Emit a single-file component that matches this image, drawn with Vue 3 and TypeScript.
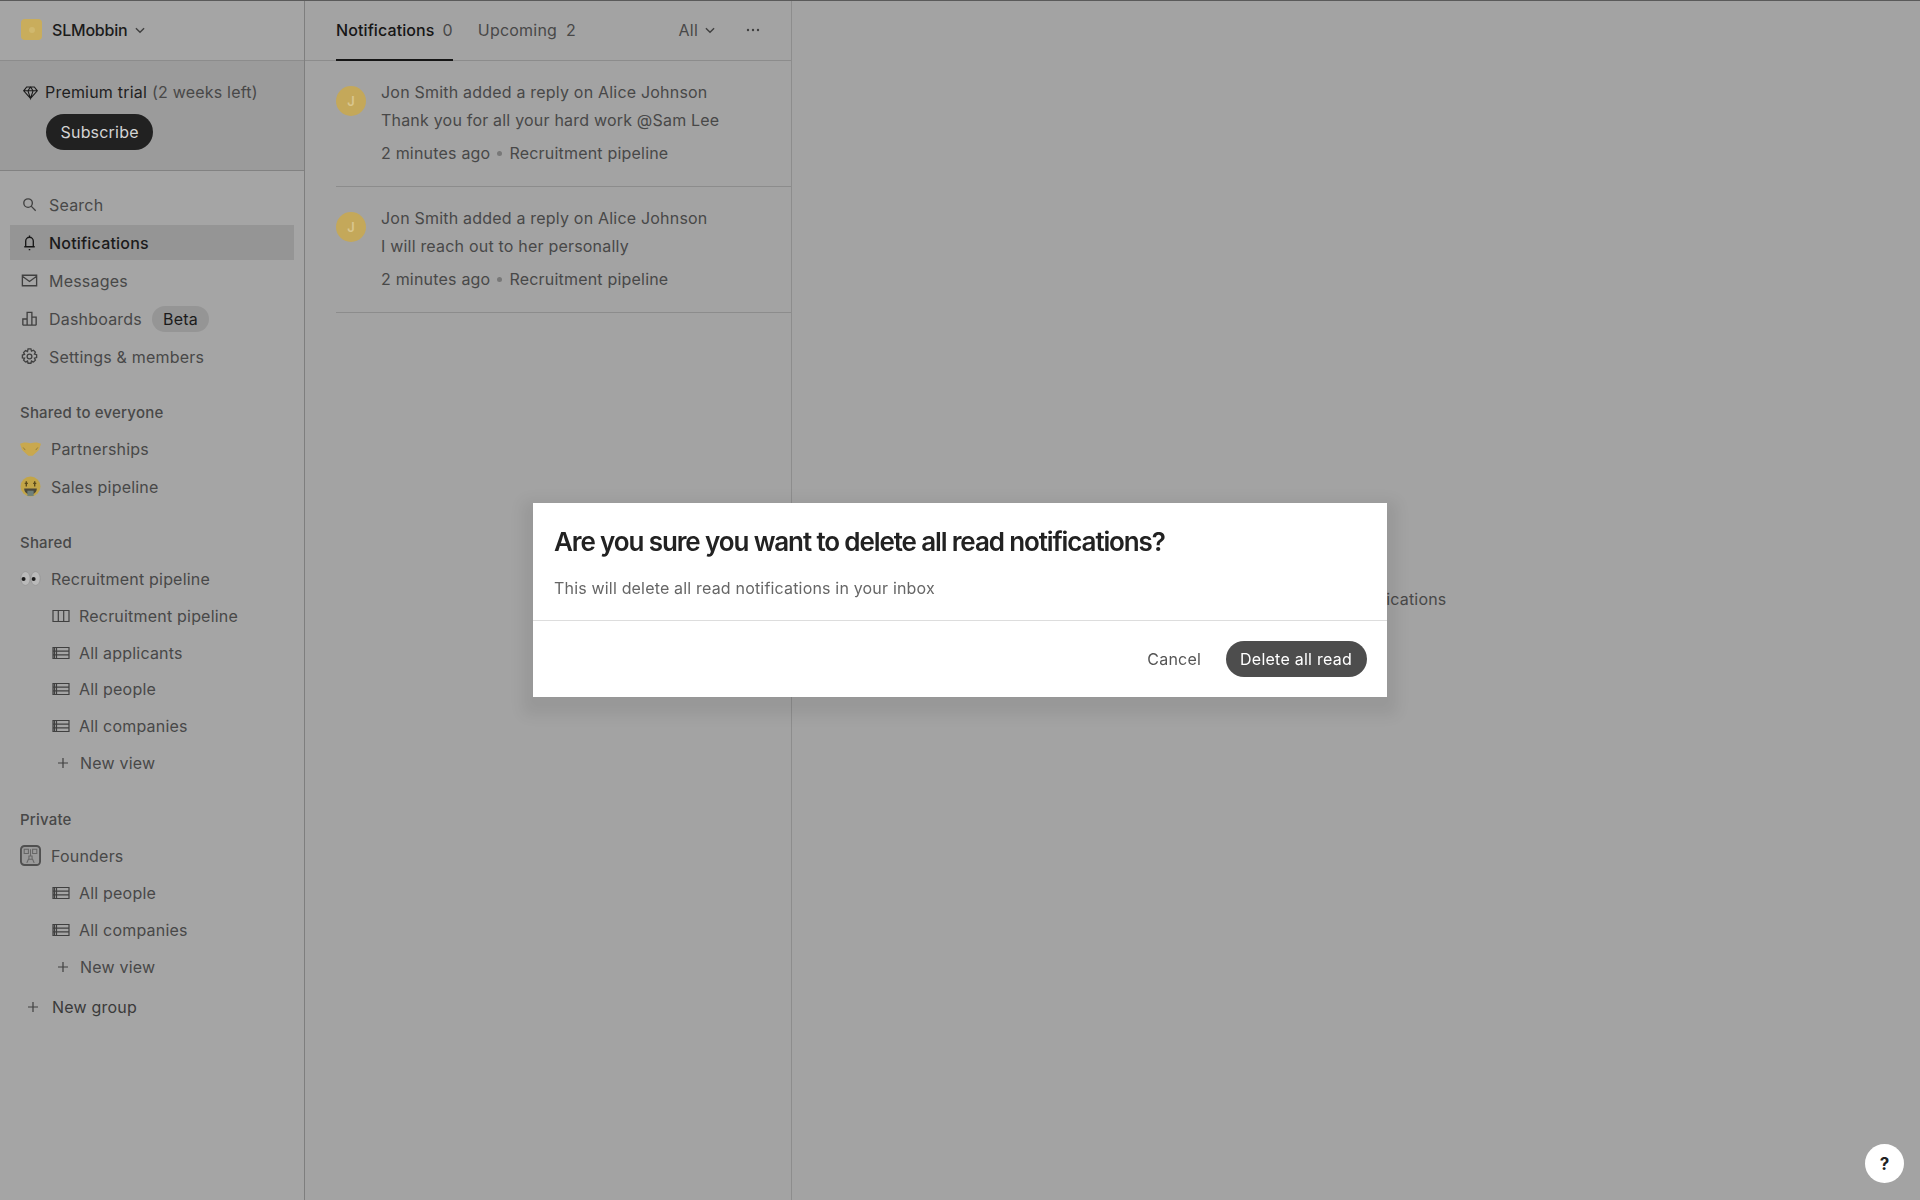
<template>
  <div class="page">
    <aside class="sidebar">
      <header class="workspace">
        <span class="logo"><i></i></span>
        <span class="workspace-name">SLMobbin</span>
        <svg class="chevron" viewBox="0 0 12 12"><path d="M2.500 4.500 6 8l3.500-3.500" /></svg>
      </header>

      <section class="trial">
        <div class="trial-line">
          <svg class="diamond" viewBox="0 0 20 20">
            <path d="M5.500 3.500h9l3.500 4.500-8 9-8-9zM2 8h16M7 8l3 9 3-9-3-4.500-3 4.500z" />
          </svg>
          <span class="trial-name">Premium trial</span>
          <span class="trial-left">(2 weeks left)</span>
        </div>
        <button class="subscribe">Subscribe</button>
      </section>

      <nav class="nav">
        <a
          v-for="item in mainNav"
          :key="item.label"
          :class="['nav-row', { active: item.active }]"
        >
          <svg class="icon" viewBox="0 0 20 20"><path :d="icons[item.icon]" /></svg>
          <span>{{ item.label }}</span>
          <span v-if="item.badge" class="badge">{{ item.badge }}</span>
        </a>
      </nav>

      <div class="group first">
        <h4>Shared to everyone</h4>
        <a class="nav-row emoji-row">
          <svg class="emoji" viewBox="0 0 20 20">
            <path fill="#c9a84e" d="M0 5.500c4-1.500 6-1.500 10-.5 4-1 6-1 10 .5l-2 6-6 5.500h-4l-6-5.500z" />
            <path fill="none" stroke="#8a7636" stroke-width=".8" d="M3 9l2 2.500M17 9l-2 2.500" />
          </svg>
          <span>Partnerships</span>
        </a>
        <a class="nav-row emoji-row">
          <svg class="emoji" viewBox="0 0 20 20">
            <circle cx="10" cy="10" r="9.500" fill="#c2a548" />
            <path fill="none" stroke="#5a4a1c" stroke-width="1.300" d="M6 5v5M14 5v5M4.500 7h3M12.500 7h3" />
            <path fill="#4a473a" d="M4 12h12c0 3.500-2.500 5.500-6 5.500s-6-2-6-5.500z" />
            <path fill="#6e7f7a" d="M7 14h6v5H7z" />
          </svg>
          <span>Sales pipeline</span>
        </a>
      </div>

      <div class="group">
        <h4>Shared</h4>
        <a class="nav-row emoji-row">
          <svg class="emoji" viewBox="0 0 20 20">
            <ellipse cx="5.200" cy="10" rx="4.400" ry="6.600" fill="#b9b9b9" stroke="#8a8a8a" stroke-width=".5" />
            <ellipse cx="14.800" cy="10" rx="4.400" ry="6.600" fill="#b9b9b9" stroke="#8a8a8a" stroke-width=".5" />
            <circle cx="3.400" cy="10.500" r="1.900" fill="#1c1c1c" />
            <circle cx="13" cy="10.500" r="1.900" fill="#1c1c1c" />
          </svg>
          <span>Recruitment pipeline</span>
        </a>
        <div class="sub-rows">
          <a v-for="view in sharedViews" :key="view.label" class="sub-row">
            <svg class="sub-icon" viewBox="0 0 18 14"><path :d="icons[view.icon]" /></svg>
            <span>{{ view.label }}</span>
          </a>
          <a class="sub-row new-view">
            <svg class="plus" viewBox="0 0 12 12"><path d="M6 1v10M1 6h10" /></svg>
            <span>New view</span>
          </a>
        </div>
      </div>

      <div class="group">
        <h4>Private</h4>
        <a class="nav-row emoji-row">
          <svg class="emoji" viewBox="0 0 20 20">
            <rect x=".9" y=".9" width="18.200" height="18.200" rx="3.500" fill="#9a9a9a" stroke="#505050" stroke-width="1.800" />
            <path fill="none" stroke="#666" d="M4 4h4v4H4zM12 4h4v4h-4zM8.500 10.500h3v3h-3zM6.500 17l1.500-3.500h4l1.500 3.500M10 4v6.500" />
          </svg>
          <span>Founders</span>
        </a>
        <div class="sub-rows">
          <a v-for="view in privateViews" :key="view.label" class="sub-row">
            <svg class="sub-icon" viewBox="0 0 18 14"><path :d="icons[view.icon]" /></svg>
            <span>{{ view.label }}</span>
          </a>
          <a class="sub-row new-view">
            <svg class="plus" viewBox="0 0 12 12"><path d="M6 1v10M1 6h10" /></svg>
            <span>New view</span>
          </a>
        </div>
      </div>

      <a class="new-group">
        <svg class="plus" viewBox="0 0 12 12"><path d="M6 1v10M1 6h10" /></svg>
        <span>New group</span>
      </a>
    </aside>

    <main class="inbox">
      <header class="tabs">
        <div class="tab current">
          <span class="tab-name">Notifications</span>
          <span class="tab-count">0</span>
        </div>
        <div class="tab">
          <span class="tab-name">Upcoming</span>
          <span class="tab-count">2</span>
        </div>
        <div class="filter">
          <span>All</span>
          <svg class="chevron" viewBox="0 0 12 12"><path d="M2.500 4.500 6 8l3.500-3.500" /></svg>
        </div>
        <svg class="more" viewBox="0 0 14 4">
          <circle cx="2" cy="2" r="1.200" />
          <circle cx="7" cy="2" r="1.200" />
          <circle cx="12" cy="2" r="1.200" />
        </svg>
      </header>

      <article v-for="note in notes" :key="note.body" class="note">
        <span class="avatar">J</span>
        <div class="note-text">
          <p>Jon Smith added a reply on Alice Johnson</p>
          <p>{{ note.body }}</p>
          <p class="note-meta">
            <span>2 minutes ago</span>
            <i class="dot"></i>
            <span>Recruitment pipeline</span>
          </p>
        </div>
      </article>
    </main>

    <section class="empty">
      <span>No unread notifications</span>
    </section>

    <div class="dialog-layer">
      <div class="modal">
        <div class="modal-body">
          <h2>Are you sure you want to delete all read notifications?</h2>
          <p>This will delete all read notifications in your inbox</p>
        </div>
        <div class="modal-actions">
          <button class="cancel">Cancel</button>
          <button class="confirm">Delete all read</button>
        </div>
      </div>
    </div>

    <button class="help">?</button>
  </div>
</template>

<script setup lang="ts">
const icons: Record<string, string> = {
  search: "M13 8.500a4.500 4.500 0 1 1-9 0 4.500 4.500 0 0 1 9 0ZM12 12l4.500 4.500",
  bell: "M10 2.500v1.500M4.500 14.500h11M6 14.500V8.500a4 4 0 0 1 8 0v6M9.200 17.500h1.600",
  mail: "M2.500 4.500h15v11h-15zM2.500 5.500 10 11l7.500-5.500",
  chart: "M3 17v-6.500h4.500V17M7.500 17V3.500h5V17M12.500 17V8.500H17V17M3 17h14",
  gear: "M8.500 2h3l.6 2.300 2.100-.9 2 2-1 2 2.300.7v3l-2.300.6 1 2.100-2 2-2.100-1-.6 2.300h-3l-.6-2.300-2.100 1-2-2 1-2.100L2.500 11.500v-3l2.300-.7-1-2 2-2 2.100.9zM12.500 10a2.500 2.500 0 1 1-5 0 2.500 2.500 0 0 1 5 0Z",
  columns: "M1 1.500h16v11H1zM6.300 1.500v11M11.700 1.500v11",
  table: "M1 1.500h16v11H1zM1 5.200h16M1 8.800h16M4.500 1.500v11M2.500 1.500v11",
};

const mainNav = [
  { label: "Search", icon: "search" },
  { label: "Notifications", icon: "bell", active: true },
  { label: "Messages", icon: "mail" },
  { label: "Dashboards", icon: "chart", badge: "Beta" },
  { label: "Settings & members", icon: "gear" },
];

const sharedViews = [
  { label: "Recruitment pipeline", icon: "columns" },
  { label: "All applicants", icon: "table" },
  { label: "All people", icon: "table" },
  { label: "All companies", icon: "table" },
];

const privateViews = [
  { label: "All people", icon: "table" },
  { label: "All companies", icon: "table" },
];

const notes = [
  { body: "Thank you for all your hard work @Sam Lee" },
  { body: "I will reach out to her personally" },
];
</script>

<style>
body {
  margin: 0;
  background: #a3a3a3;
}
</style>

<style scoped>
.page {
  display: grid;
  grid-template-columns: 305px 487px 1fr;
  height: 1200px;
  overflow: hidden;
  font-family: Inter, "Liberation Sans", sans-serif;
  font-size: 16px;
  letter-spacing: 0.2px;
  color: #484848;
  border-top: 1px solid #5a5a5a;
  box-sizing: border-box;
}

/* sidebar */
.sidebar {
  border-right: 1px solid #7e7e7e;
  background: #a5a5a5;
}

.workspace {
  display: flex;
  align-items: center;
  height: 57px;
  padding: 0 20px 2px 21px;
  border-bottom: 1px solid #8c8c8c;
}

.logo {
  display: flex;
  align-items: center;
  justify-content: center;
  width: 21px;
  height: 21px;
  border-radius: 4px;
  background: #c9ad5c;
}

.logo i {
  width: 6px;
  height: 6px;
  border-radius: 50%;
  background: #d0b86e;
}

.workspace-name {
  margin-left: 10px;
  font-weight: 500;
  letter-spacing: -0.2px;
  color: #1b1b1b;
}

.chevron {
  width: 14px;
  height: 14px;
  margin-left: 5px;
  fill: none;
  stroke: #404040;
  stroke-width: 1.200;
}

.trial {
  height: 110px;
  padding: 20px 0 0 22px;
  box-sizing: border-box;
  background: #9b9b9b;
  border-bottom: 1px solid #828282;
}

.trial-line {
  display: flex;
  align-items: center;
  height: 22px;
}

.diamond {
  width: 17px;
  height: 17px;
  margin-right: 6px;
  fill: none;
  stroke: #1b1b1b;
  stroke-width: 1.300;
}

.trial-name {
  color: #1f1f1f;
  margin-right: 5px;
}

.trial-left {
  color: #484848;
}

.subscribe {
  display: block;
  height: 36px;
  margin: 11px 0 0 24px;
  padding: 0 14.500px;
  border: none;
  border-radius: 18px;
  background: #212121;
  color: #d4d4d4;
  font: inherit;
  letter-spacing: inherit;
}

.nav {
  display: flex;
  flex-direction: column;
  gap: 3px;
  padding: 16px 10px 0;
}

.nav-row {
  display: flex;
  align-items: center;
  height: 35px;
  padding-left: 10px;
}

.nav-row.active {
  background: #959595;
  color: #1b1b1b;
  font-weight: 500;
}

.icon {
  flex: none;
  width: 19px;
  height: 19px;
  margin-right: 10px;
  fill: none;
  stroke: #404040;
  stroke-width: 1.400;
}

.active .icon {
  stroke: #161616;
}

.badge {
  height: 26px;
  margin-left: 10px;
  padding: 0 11px;
  border-radius: 13px;
  background: #959595;
  color: #1b1b1b;
  line-height: 26px;
}

.group {
  display: flex;
  flex-direction: column;
  padding: 29px 10px 0;
}

.group h4 {
  height: 20px;
  margin: 0 0 8px 10px;
  font-size: 15px;
  font-weight: 500;
  line-height: 20px;
}

.emoji-row + .emoji-row {
  margin-top: 3px;
}

.emoji {
  flex: none;
  width: 21px;
  height: 21px;
  margin-right: 10px;
}

.sub-rows {
  display: flex;
  flex-direction: column;
  margin-top: 1.500px;
}

.sub-row {
  display: flex;
  align-items: center;
  height: 36.750px;
  padding-left: 42px;
}

.sub-icon {
  flex: none;
  width: 18px;
  height: 14px;
  margin-right: 9px;
  fill: none;
  stroke: #404040;
  stroke-width: 1.200;
}

.plus {
  flex: none;
  width: 12px;
  height: 12px;
  fill: none;
  stroke: #404040;
  stroke-width: 1.200;
}

.new-view .plus {
  margin: 0 11px 0 5px;
}

.new-group {
  display: flex;
  align-items: center;
  height: 35px;
  margin-top: 4px;
  padding-left: 27px;
  color: #3a3a3a;
}

.new-group .plus {
  margin-right: 13px;
}

/* inbox column */
.inbox {
  border-right: 1px solid #8d8d8d;
}

.tabs {
  display: flex;
  align-items: center;
  height: 59px;
  padding-left: 31px;
  border-bottom: 1px solid #8c8c8c;
}

.tab {
  display: flex;
  align-items: center;
  gap: 9px;
  height: 59px;
  padding: 0 25px 2px 0;
  box-sizing: border-box;
}

.tab.current {
  position: relative;
  gap: 8px;
  padding-right: 0;
  margin-right: 25px;
}

.tab.current .tab-name {
  color: #161616;
  font-weight: 500;
  letter-spacing: 0.1px;
}

.tab.current::after {
  content: "";
  position: absolute;
  left: 0;
  right: 0;
  bottom: -1px;
  height: 2px;
  background: #161616;
}

.filter {
  display: flex;
  align-items: center;
  margin-left: auto;
  padding-bottom: 2px;
}

.more {
  width: 14px;
  height: 4px;
  margin: 0 31px 2px 29px;
  fill: #404040;
}

.note {
  display: flex;
  margin-left: 31px;
  height: 126px;
  padding-top: 17px;
  box-sizing: border-box;
  border-bottom: 1px solid #8c8c8c;
}

.avatar {
  flex: none;
  display: flex;
  align-items: center;
  justify-content: center;
  width: 30px;
  height: 30px;
  margin-top: 8px;
  border-radius: 50%;
  background: #c4a85a;
  color: #d9c68e;
  font-size: 13px;
  font-weight: 600;
}

.note-text {
  margin-left: 15px;
}

.note-text p {
  margin: 0;
  height: 28px;
  line-height: 28px;
}

.note-text .note-meta {
  display: flex;
  align-items: center;
  margin-top: 5px;
}

.dot {
  width: 5px;
  height: 5px;
  margin: 0 7px;
  border-radius: 50%;
  background: #787878;
}

/* empty pane */
.empty {
  display: flex;
  align-items: center;
  justify-content: center;
  padding-bottom: 4px;
}

/* dialog */
.dialog-layer {
  position: fixed;
  inset: 0;
  display: flex;
  align-items: center;
  justify-content: center;
}

.modal {
  width: 854px;
  height: 194px;
  display: flex;
  flex-direction: column;
  background: #fff;
  box-shadow: 0 8px 14px 10px rgba(0, 0, 0, 0.07);
}

.modal-body {
  height: 118px;
  padding: 21px 21px 0;
  box-sizing: border-box;
  border-bottom: 1px solid #ddd;
}

.modal-body h2 {
  margin: 0;
  font-size: 26px;
  font-weight: 600;
  line-height: 36px;
  letter-spacing: -1.120px;
  color: #222;
}

.modal-body p {
  margin: 16px 0 0;
  line-height: 24px;
  letter-spacing: 0.18px;
  color: #666;
}

.modal-actions {
  flex: 1;
  display: flex;
  align-items: center;
  justify-content: flex-end;
  gap: 25px;
  padding-right: 20px;
}

.cancel {
  padding: 0;
  border: none;
  background: none;
  color: #555;
  font: inherit;
  letter-spacing: inherit;
}

.confirm {
  height: 36px;
  padding: 0 15px 0 14px;
  border: none;
  border-radius: 18px;
  background: #4d4d4d;
  color: #fff;
  font: inherit;
  letter-spacing: 0.25px;
}

.help {
  position: fixed;
  right: 16px;
  bottom: 17px;
  width: 39px;
  height: 39px;
  padding: 0;
  border: none;
  border-radius: 50%;
  background: #fff;
  color: #222;
  font-family: inherit;
  font-size: 17px;
  font-weight: 700;
}
</style>
